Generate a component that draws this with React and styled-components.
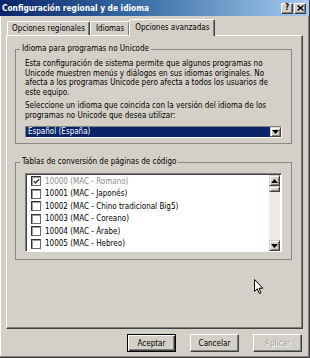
import React from 'react';
import styled, { createGlobalStyle, css } from 'styled-components';

const FONT = `"DejaVu Sans Condensed", "DejaVu Sans", sans-serif`;

const Global = createGlobalStyle`
  html, body { margin: 0; padding: 0; background: #d4d0c8; }
  body { width: 310px; height: 358px; overflow: hidden; }
  *, *::before, *::after { box-sizing: border-box; }
`;

const Window = styled.div`
  position: relative;
  width: 310px;
  height: 358px;
  background: #d4d0c8;
  font-family: ${FONT};
  font-size: 8px;
  color: #000;
  display: flex;
  flex-direction: column;
  border-right: 1px solid #404040;
  border-bottom: 1px solid #404040;
  box-shadow: inset -1px -1px #808080, inset 1px 0 #ffffff;
`;

const TitleBar = styled.div`
  height: 16px;
  flex: none;
  display: flex;
  align-items: center;
  justify-content: space-between;
  padding: 0 3px 0 2px;
  background: linear-gradient(to right, #0a246a 0%, #3a6ea5 45%, #a6caf0 100%);
`;

const TitleText = styled.span`
  color: #fff;
  font-weight: bold;
  font-size: 8.3px;
  white-space: nowrap;
`;

const CaptionGroup = styled.div`
  display: flex;
  gap: 1px;
`;

const CaptionButton = styled.div`
  width: 12px;
  height: 11px;
  background: #d4d0c8;
  border: 1px solid;
  border-color: #fff #404040 #404040 #fff;
  box-shadow: inset -1px -1px #808080;
  display: flex;
  align-items: center;
  justify-content: center;
  font-weight: bold;
  font-size: 8px;
  line-height: 1;
  color: #000;
`;

const Body = styled.div`
  flex: 1;
  display: flex;
  flex-direction: column;
  padding: 3px 6px 0 6px;
`;

const TabStrip = styled.div`
  height: 16px;
  display: flex;
  align-items: flex-end;
  padding-left: 1px;
  position: relative;
  z-index: 1;
`;

const Tab = styled.div`
  height: 14px;
  padding: 0 ${(p) => p.$pad}px;
  display: flex;
  align-items: center;
  white-space: nowrap;
  background: #d4d0c8;
  border-top: 1px solid #fff;
  border-left: 1px solid #fff;
  border-right: 1px solid #404040;
  border-top-left-radius: 2px;
  border-top-right-radius: 2px;
  box-shadow: inset -1px 0 #808080;
  ${(p) =>
    p.$active &&
    css`
      height: 17px;
      margin-bottom: -1px;
      margin-left: -1px;
      padding-bottom: 2px;
    `}
`;

const Panel = styled.div`
  height: 294px;
  border: 1px solid;
  border-color: #fff #404040 #404040 #fff;
  box-shadow: inset -1px -1px #808080;
  padding: 8px 10px 0 8px;
  display: flex;
  flex-direction: column;
`;

const Group = styled.fieldset`
  margin: 0;
  margin-top: ${(p) => p.$top || 0}px;
  padding: 0 9px ${(p) => p.$bottom}px 9px;
  border: 1px solid #8a8884;
  min-width: 0;
`;

const Legend = styled.legend`
  padding: 0 2px;
  margin-left: -5px;
  line-height: 10px;
  font-size: 8px;
  white-space: nowrap;
`;

const Para = styled.p`
  margin: ${(p) => p.$top}px 0 0 0;
  line-height: 9.5px;
  font-size: 8px;
`;

const Combo = styled.div`
  margin-top: 6px;
  height: 12px;
  display: flex;
  border: 1px solid;
  border-color: #808080 #fff #fff #808080;
  background: #0a246a;
`;

const ComboText = styled.span`
  flex: 1;
  color: #fff;
  line-height: 10px;
  padding-left: 2px;
  font-size: 8px;
`;

const ArrowButton = styled.div`
  width: 11px;
  flex: none;
  background: #d4d0c8;
  border: 1px solid;
  border-color: #d4d0c8 #404040 #404040 #d4d0c8;
  box-shadow: inset 1px 1px #fff, inset -1px -1px #808080;
  display: flex;
  align-items: center;
  justify-content: center;
`;

const ListBox = styled.div`
  margin-top: 6px;
  height: 79px;
  display: flex;
  border: 1px solid;
  border-color: #808080 #fff #fff #808080;
  box-shadow: inset 1px 1px #404040;
  background: #fff;
  overflow: hidden;
`;

const ListRows = styled.div`
  flex: 1;
  padding: 1px 0 0 5px;
`;

const Row = styled.div`
  height: 12.5px;
  display: flex;
  align-items: center;
  gap: 4px;
  color: ${(p) => (p.$disabled ? '#8e8e8e' : '#000')};
  white-space: nowrap;
  font-size: 8px;
`;

const CheckBox = styled.span`
  width: 10px;
  height: 10px;
  flex: none;
  background: #fff;
  border: 1px solid;
  border-color: #303030 #6a6a6a #6a6a6a #303030;
  box-shadow: inset 1px 1px #9a9a9a;
  display: flex;
  align-items: center;
  justify-content: center;
`;

const ScrollBar = styled.div`
  width: 11px;
  flex: none;
  margin: 1px 1px 0 0;
  display: flex;
  flex-direction: column;
  background-color: #ecebe8;
`;

const Thumb = styled.div`
  height: 6px;
  background: #d4d0c8;
  border: 1px solid;
  border-color: #d4d0c8 #404040 #404040 #d4d0c8;
  box-shadow: inset 1px 1px #fff, inset -1px -1px #808080;
`;

const Track = styled.div`
  flex: 1;
`;

const ScrollButton = styled(ArrowButton)`
  height: 11px;
`;

const ButtonRow = styled.div`
  display: flex;
  justify-content: flex-end;
  gap: 14px;
  padding-top: 5px;
  padding-right: 1px;
`;

const Button = styled.div`
  width: 49px;
  height: 18px;
  display: flex;
  align-items: center;
  justify-content: center;
  font-size: 8px;
  background: #d4d0c8;
  border: 1px solid;
  border-color: #fff #404040 #404040 #fff;
  box-shadow: inset -1px -1px #808080;
  color: #000;
  ${(p) =>
    p.$default &&
    css`
      border-color: #000;
      box-shadow: inset 1px 1px #fff, inset -1px -1px #404040, inset -2px -2px #808080;
    `}
  ${(p) =>
    p.$disabled &&
    css`
      color: #a0a0a0;
      text-shadow: 1px 1px #fff;
    `}
`;

const Cursor = styled.svg`
  position: absolute;
  left: 254px;
  top: 279px;
`;

const Tri = ({ up }) => (
  <svg width="7" height="4" viewBox="0 0 7 4">
    <path d={up ? 'M3.5 0 L7 4 L0 4 Z' : 'M0 0 L7 0 L3.5 4 Z'} fill="#000" />
  </svg>
);

const Check = ({ color = '#333' }) => (
  <svg width="7" height="7" viewBox="0 0 7 7">
    <path d="M0.8 3.2 L2.6 5 L6.2 1.2" stroke={color} strokeWidth="1.5" fill="none" />
  </svg>
);

const items = [
  { t: '10000 (MAC - Romano)', checked: true, disabled: true },
  { t: '10001 (MAC - Japonés)' },
  { t: '10002 (MAC - Chino tradicional Big5)' },
  { t: '10003 (MAC - Coreano)' },
  { t: '10004 (MAC - Árabe)' },
  { t: '10005 (MAC - Hebreo)' },
];

export default function App() {
  return (
    <>
      <Global />
      <Window>
        <TitleBar>
          <TitleText>Configuración regional y de idioma</TitleText>
          <CaptionGroup>
            <CaptionButton>?</CaptionButton>
            <CaptionButton>
              <svg width="7" height="6" viewBox="0 0 7 6">
                <path d="M0.5 0.5 L6.5 5.5 M6.5 0.5 L0.5 5.5" stroke="#000" strokeWidth="1.4" />
              </svg>
            </CaptionButton>
          </CaptionGroup>
        </TitleBar>
        <Body>
          <TabStrip>
            <Tab $pad={4}>Opciones regionales</Tab>
            <Tab $pad={5}>Idiomas</Tab>
            <Tab $pad={5} $active>Opciones avanzadas</Tab>
          </TabStrip>
          <Panel>
            <Group $bottom={5}>
              <Legend>Idioma para programas no Unicode</Legend>
              <Para $top={5}>
                Esta configuración de sistema permite que algunos programas no Unicode muestren menús y
                diálogos en sus idiomas originales. No afecta a los programas Unicode pero afecta a todos
                los usuarios de este equipo.
              </Para>
              <Para $top={4}>
                Seleccione un idioma que coincida con la versión del idioma de los programas no Unicode
                que desea utilizar:
              </Para>
              <Combo>
                <ComboText>Español (España)</ComboText>
                <ArrowButton>
                  <Tri />
                </ArrowButton>
              </Combo>
            </Group>
            <Group $top={13} $bottom={7}>
              <Legend>Tablas de conversión de páginas de código</Legend>
              <ListBox>
                <ListRows>
                  {items.map((it) => (
                    <Row key={it.t} $disabled={it.disabled}>
                      <CheckBox>{it.checked && <Check />}</CheckBox>
                      {it.t}
                    </Row>
                  ))}
                </ListRows>
                <ScrollBar>
                  <ScrollButton>
                    <Tri up />
                  </ScrollButton>
                  <Thumb />
                  <Track />
                  <ScrollButton>
                    <Tri />
                  </ScrollButton>
                </ScrollBar>
              </ListBox>
            </Group>
          </Panel>
          <ButtonRow>
            <Button $default>Aceptar</Button>
            <Button>Cancelar</Button>
            <Button $disabled>Aplicar</Button>
          </ButtonRow>
        </Body>
        <Cursor width="10" height="16" viewBox="0 0 10 16">
          <path d="M0.5 0.5 L0.5 12.5 L3.3 9.8 L5.3 14.5 L7 13.8 L5 9.2 L8.8 9.2 Z" fill="#fff" stroke="#000" strokeWidth="1" />
        </Cursor>
      </Window>
    </>
  );
}
